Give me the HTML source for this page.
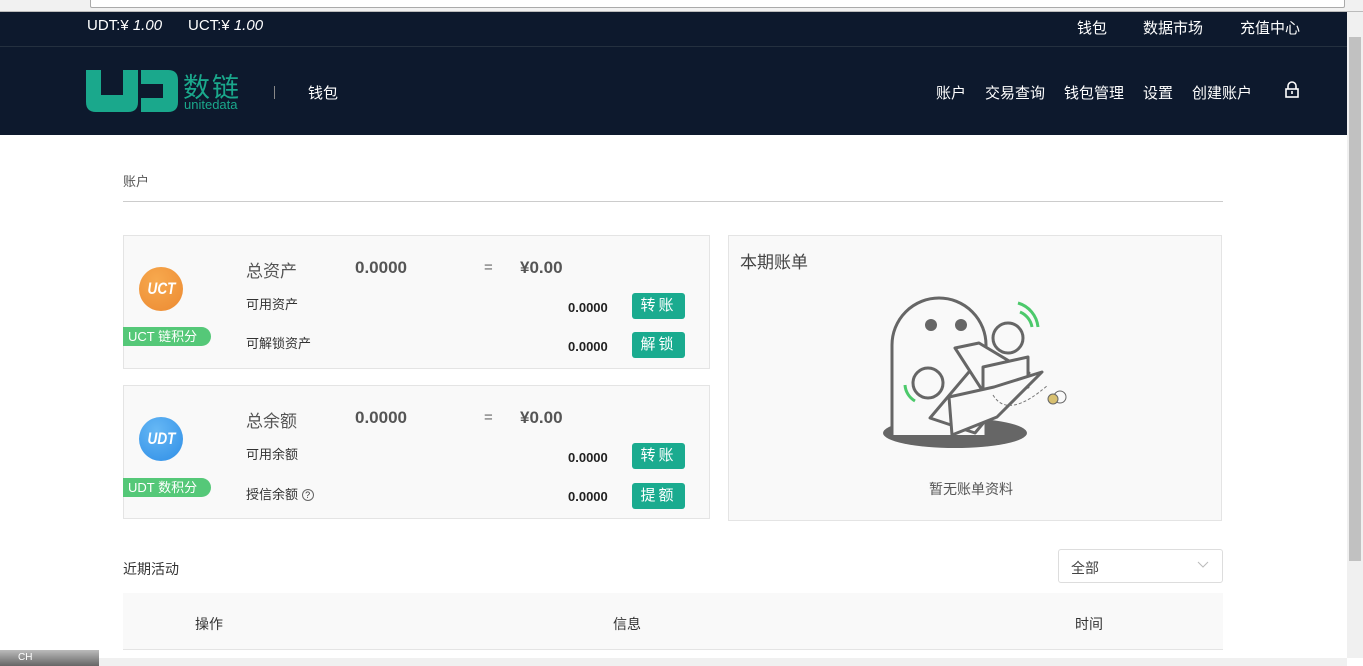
<!DOCTYPE html>
<html><head><meta charset="utf-8"><style>
*{margin:0;padding:0;box-sizing:border-box}
body{width:1363px;height:666px;overflow:hidden;background:#fff;font-family:"Liberation Sans","Noto Sans CJK SC",sans-serif;position:relative;color:#333}
.abs{position:absolute}
.chrome{left:0;top:0;width:1363px;height:12px;background:#f1f1f1;border-bottom:1px solid #bbb}
.chrome .url{position:absolute;left:90px;top:-2px;width:1255px;height:10px;background:#fff;border:1px solid #aaa;border-radius:2px}
.hdr{left:0;top:12px;width:1347px;height:123px;background:#0d192d}
.hline{left:0;top:46px;width:1347px;height:1px;background:#24303f}
.w{color:#fff;font-size:15px}
.sb{left:1347px;top:12px;width:16px;height:646px;background:#f0f0f0}
.thumb{left:1349px;top:37px;width:12px;height:524px;background:#c1c1c1}
.hsb{left:0;top:658px;width:1347px;height:8px;background:#f0f0f0}
.card{background:#f9f9f9;border:1px solid #e4e4e4}
.btn{background:#1aab8f;color:#fff;font-size:15px;width:53px;height:26px;border-radius:3px;text-align:center;line-height:26px;letter-spacing:3px}
.tag{background:#55c878;color:#fff;font-size:13px;height:19px;line-height:19px;padding-left:5px;width:88px;border-radius:0 10px 10px 0}
.coin{width:44px;height:44px;border-radius:50%;color:#fff;font-weight:bold;font-style:italic;font-size:17px;text-align:center;line-height:44px}
.coin span{display:inline-block;transform:scaleX(0.8)}
</style></head><body>
<div class="abs chrome"><div class="url"></div></div>
<div class="abs hdr"></div>
<div class="abs hline"></div>
<div class="abs w" style="left:87px;top:17px">UDT:¥ <i>1.00</i></div>
<div class="abs w" style="left:188px;top:17px">UCT:¥ <i>1.00</i></div>
<div class="abs w" style="left:1077px;top:17px">钱包</div>
<div class="abs w" style="left:1143px;top:17px">数据市场</div>
<div class="abs w" style="left:1240px;top:17px">充值中心</div>
<svg class="abs" style="left:86px;top:70px" width="92" height="42" viewBox="0 0 92 42">
<path d="M0 0h15v25h22V0h15v32q0 10-10 10H10Q0 42 0 32z" fill="#1aa88c"/>
<path d="M55 0h27q10 0 10 10v22q0 10-10 10H55V28h22V14H55z" fill="#1aa88c"/>
</svg>
<div class="abs" style="left:183px;top:66px;color:#1aa88c;font-size:27px;letter-spacing:2px">数链</div>
<div class="abs" style="left:184px;top:97px;color:#1aa88c;font-size:13px">unitedata</div>
<div class="abs" style="left:274px;top:86px;width:1px;height:13px;background:#888"></div>
<div class="abs w" style="left:308px;top:82px">钱包</div>
<div class="abs w" style="left:936px;top:82px">账户</div>
<div class="abs w" style="left:985px;top:82px">交易查询</div>
<div class="abs w" style="left:1064px;top:82px">钱包管理</div>
<div class="abs w" style="left:1143px;top:82px">设置</div>
<div class="abs w" style="left:1192px;top:82px">创建账户</div>
<svg class="abs" style="left:1284px;top:81px" width="16" height="17" viewBox="0 0 16 17"><path d="M4 8V5a4 4 0 0 1 8 0v3" fill="none" stroke="#fff" stroke-width="1.6"/><rect x="2" y="8" width="12" height="8" fill="none" stroke="#fff" stroke-width="1.6"/><path d="M8 10v3" stroke="#fff" stroke-width="1.6"/></svg>

<div class="abs" style="left:123px;top:171px;font-size:13px;color:#555">账户</div>
<div class="abs" style="left:123px;top:201px;width:1100px;height:1px;background:#ccc"></div>

<div class="abs card" style="left:123px;top:235px;width:587px;height:134px"></div>
<div class="abs coin" style="left:139px;top:267px;background:radial-gradient(circle at 40% 30%,#f7a94e,#ec8a32)"><span>UCT</span></div>
<div class="abs tag" style="left:123px;top:327px">UCT 链积分</div>
<div class="abs" style="left:246px;top:257px;font-size:17px;color:#555">总资产</div>
<div class="abs" style="left:355px;top:258px;font-size:17px;font-weight:bold;color:#555">0.0000</div>
<div class="abs" style="left:484px;top:259px;font-size:15px;color:#666">=</div>
<div class="abs" style="left:520px;top:258px;font-size:17px;font-weight:bold;color:#555">¥0.00</div>
<div class="abs" style="left:246px;top:294px;font-size:13px">可用资产</div>
<div class="abs" style="left:246px;top:333px;font-size:13px">可解锁资产</div>
<div class="abs" style="left:568px;top:300px;font-size:13px;font-weight:bold;color:#222">0.0000</div>
<div class="abs" style="left:568px;top:339px;font-size:13px;font-weight:bold;color:#222">0.0000</div>
<div class="abs btn" style="left:632px;top:293px">转账</div>
<div class="abs btn" style="left:632px;top:332px">解锁</div>

<div class="abs card" style="left:123px;top:385px;width:587px;height:134px"></div>
<div class="abs coin" style="left:139px;top:417px;background:radial-gradient(circle at 40% 30%,#66b8f5,#2f8ee6)"><span>UDT</span></div>
<div class="abs tag" style="left:123px;top:478px">UDT 数积分</div>
<div class="abs" style="left:246px;top:407px;font-size:17px;color:#555">总余额</div>
<div class="abs" style="left:355px;top:408px;font-size:17px;font-weight:bold;color:#555">0.0000</div>
<div class="abs" style="left:484px;top:409px;font-size:15px;color:#666">=</div>
<div class="abs" style="left:520px;top:408px;font-size:17px;font-weight:bold;color:#555">¥0.00</div>
<div class="abs" style="left:246px;top:444px;font-size:13px">可用余额</div>
<div class="abs" style="left:246px;top:484px;font-size:13px">授信余额 <span style="display:inline-block;width:12px;height:12px;border:1px solid #666;border-radius:50%;font-size:9px;text-align:center;line-height:10px;vertical-align:1px">?</span></div>
<div class="abs" style="left:568px;top:450px;font-size:13px;font-weight:bold;color:#222">0.0000</div>
<div class="abs" style="left:568px;top:489px;font-size:13px;font-weight:bold;color:#222">0.0000</div>
<div class="abs btn" style="left:632px;top:443px">转账</div>
<div class="abs btn" style="left:632px;top:483px">提额</div>

<div class="abs card" style="left:728px;top:235px;width:494px;height:286px"></div>
<div class="abs" style="left:740px;top:248px;font-size:17px;color:#444">本期账单</div>
<svg class="abs" style="left:860px;top:270px" width="240" height="190" viewBox="0 0 240 190">
<ellipse cx="95" cy="163" rx="72" ry="15" fill="#666"/>
<path d="M32 165V75a47 47 0 0 1 94 0v90" fill="#f9f9f9" stroke="#666" stroke-width="3"/>
<circle cx="71" cy="55" r="6" fill="#666"/><circle cx="101" cy="55" r="6" fill="#666"/>
<g fill="#f9f9f9" stroke="#666" stroke-width="3" stroke-linejoin="round">
<path d="M70 148l55 -65 40 20 -50 60z"/>
<path d="M95 78l24-5 50 30-45 20z"/>
<path d="M123 97l45-10 0 30-45 10z"/>
<path d="M92 165l45-18 45-45-48 15-45 10z"/>
<circle cx="148" cy="68" r="15"/>
<circle cx="68" cy="113" r="15"/>
</g>
<path d="M160 42a20 20 0 0 1 12 15M158 33a28 28 0 0 1 20 24" fill="none" stroke="#4cc96b" stroke-width="3"/>
<path d="M45 115a20 20 0 0 0 10 16" fill="none" stroke="#4cc96b" stroke-width="3"/>
<path d="M133 125q15 25 55-10" fill="none" stroke="#777" stroke-dasharray="3 2"/>
<circle cx="200" cy="127" r="6" fill="none" stroke="#666"/><circle cx="193" cy="129" r="5" fill="#d8c070" stroke="#666"/>
</svg>
<div class="abs" style="left:929px;top:479px;font-size:14px;color:#555">暂无账单资料</div>

<div class="abs" style="left:123px;top:559px;font-size:14px;color:#333">近期活动</div>
<div class="abs" style="left:1058px;top:549px;width:165px;height:34px;border:1px solid #ddd;border-radius:3px;background:#fff"></div>
<div class="abs" style="left:1071px;top:558px;font-size:14px;color:#444">全部</div>
<svg class="abs" style="left:1197px;top:561px" width="12" height="8"><path d="M1 1l5 5 5-5" fill="none" stroke="#bbb"/></svg>
<div class="abs" style="left:123px;top:593px;width:1100px;height:57px;background:#f9f9f9;border-bottom:1px solid #e4e4e4"></div>
<div class="abs" style="left:195px;top:614px;font-size:14px">操作</div>
<div class="abs" style="left:613px;top:614px;font-size:14px">信息</div>
<div class="abs" style="left:1075px;top:614px;font-size:14px">时间</div>

<div class="abs sb"></div>
<div class="abs thumb"></div>
<div class="abs hsb"></div>
<div class="abs" style="left:0;top:650px;width:99px;height:16px;background:linear-gradient(#bbb,#666);color:#fff;font-size:10px;padding-left:18px;line-height:16px">CH</div>
</body></html>
